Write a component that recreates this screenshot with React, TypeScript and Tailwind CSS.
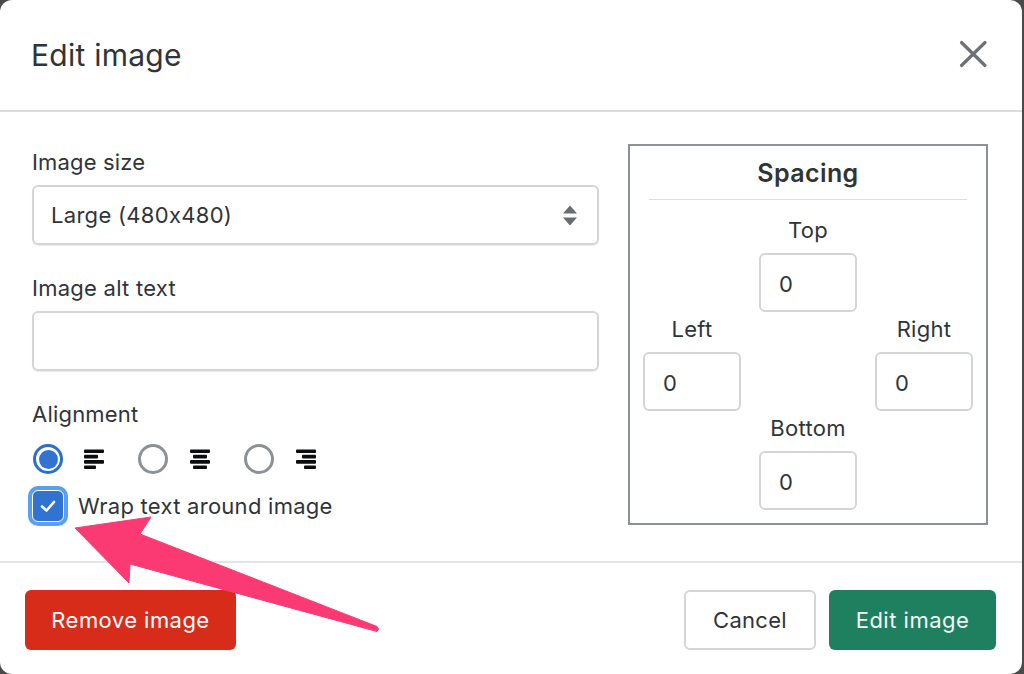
const font = { fontFamily: 'Inter, "Liberation Sans", sans-serif' };

function NumberBox() {
  return (
    <div className="flex h-[59px] w-[98px] items-center rounded-[6px] border-2 border-[#d3d6d9] bg-white pl-[18px] pt-[3px] text-[22px] text-[#303438]">
      0
    </div>
  );
}

function Field({ label }: { label: string }) {
  return (
    <div className="flex w-[98px] flex-col items-center">
      <div className="mb-[6px] h-[34px] whitespace-nowrap text-center text-[22px] leading-[34px] tracking-[0.3px] text-[#303438]">{label}</div>
      <NumberBox />
    </div>
  );
}

function AlignIcon({ kind }: { kind: 'left' | 'center' | 'right' }) {
  const bars =
    kind === 'left'
      ? [[0, 20], [0, 14], [0, 20], [0, 12]]
      : kind === 'center'
        ? [[0, 20], [3, 14], [0, 20], [3, 14]]
        : [[0, 20], [6, 14], [0, 20], [8, 12]];
  return (
    <svg width="20" height="21" viewBox="0 0 20 21" className="shrink-0">
      {bars.map(([x, w], i) => (
        <rect key={i} x={x} y={0.5 + i * 5.3} width={w} height="3.6" rx="1" fill="#0c0d0e" />
      ))}
    </svg>
  );
}

function Radio({ on }: { on?: boolean }) {
  return (
    <div
      className={
        on
          ? 'flex h-[30px] w-[30px] shrink-0 items-center justify-center rounded-full border-[3px] border-[#2c6ecb] bg-white'
          : 'h-[30px] w-[30px] shrink-0 rounded-full border-[3px] border-[#8c9196] bg-white'
      }
    >
      {on && <div className="h-[19px] w-[19px] rounded-full bg-[#3173d0]" />}
    </div>
  );
}

export default function App() {
  return (
    <div className="relative h-[674px] w-[1024px] overflow-hidden bg-[#4a4a4a] [font-feature-settings:'calt'_0]" style={font}>
      <div className="flex h-[674px] w-[1022px] flex-col rounded-[12px] bg-white text-[#303438]">
        <header className="flex h-[112px] shrink-0 items-center justify-between border-b-2 border-[#d9dbdd] pl-[31px] pr-[34px]">
          <h1 className="text-[30px] font-normal leading-none tracking-[0.25px] text-[#303438]">Edit image</h1>
          <svg width="32" height="32" viewBox="0 0 32 32" fill="none" stroke="#6d7175" strokeWidth="3.2" strokeLinecap="round">
            <path d="M5.5 3.5 L29 26.5 M29 3.5 L5.5 26.5" />
          </svg>
        </header>

        <main className="flex h-[451px] shrink-0 border-b-2 border-[#e4e5e7] pl-[32px] pt-[32px]">
          <div className="w-[567px] shrink-0">
            <div className="flex h-[41px] items-center pb-[4px] text-[22px] tracking-[0.15px]">Image size</div>
            <div className="flex h-[60px] items-center justify-between rounded-[6px] border-2 border-[#d3d6d9] pl-[17px] pr-[20px] text-[22px] tracking-[0.3px] shadow-[0_1px_1px_rgba(0,0,0,0.08)]">
              <span>Large (480x480)</span>
              <svg width="14" height="21" viewBox="0 0 14 21" fill="#6a6d70">
                <path d="M7 0.5 L14 8.5 H0 Z M0 12.5 H14 L7 20.5 Z" />
              </svg>
            </div>
            <div className="flex h-[66px] items-end pb-[12px] text-[22px] leading-none tracking-[0.25px]">Image alt text</div>
            <div className="h-[60px] rounded-[6px] border-2 border-[#d3d6d9] shadow-[0_1px_1px_rgba(0,0,0,0.08)]" />
            <div className="flex h-[66px] items-end pb-[12px] text-[22px] leading-none tracking-[0.2px]">Alignment</div>
            <div className="mt-[7px] flex h-[30px] items-center pl-[1px]">
              <Radio on />
              <div className="ml-[21px] mr-[34px]"><AlignIcon kind="left" /></div>
              <Radio />
              <div className="ml-[22px] mr-[34px]"><AlignIcon kind="center" /></div>
              <Radio />
              <div className="ml-[22px]"><AlignIcon kind="right" /></div>
            </div>
            <div className="mt-[12px] flex h-[40px] items-center">
              <div className="-ml-[4px] flex h-[40px] w-[40px] shrink-0 items-center justify-center rounded-[10px] bg-[#5a9ff0]">
                <div className="flex h-[32px] w-[32px] items-center justify-center rounded-[6px] border border-white bg-[#3173d0]">
                  <svg width="18" height="18" viewBox="0 0 18 18" fill="none" stroke="white" strokeWidth="2.6" strokeLinecap="round" strokeLinejoin="round">
                    <path d="M3 9.5 L7.5 13.5 L15 5" />
                  </svg>
                </div>
              </div>
              <span className="ml-[10px] text-[22px] tracking-[0.27px]">Wrap text around image</span>
            </div>
          </div>

          <section className="ml-[29px] h-[381px] w-[360px] shrink-0 border-2 border-[#8c9196] px-[13px]">
            <div className="mx-[6px] mb-[13px] h-[54px] border-b border-[#dcdedf] text-center text-[25px] font-semibold leading-[54px] tracking-[0.4px]">
              Spacing
            </div>
            <div className="flex justify-center"><Field label="Top" /></div>
            <div className="flex justify-between"><Field label="Left" /><Field label="Right" /></div>
            <div className="flex justify-center"><Field label="Bottom" /></div>
          </section>
        </main>

        <footer className="flex flex-1 items-start justify-between pl-[25px] pr-[26px] pt-[27px]">
          <button className="flex h-[60px] w-[211px] items-center justify-center rounded-[6px] bg-[#d72c1a] text-[22px] tracking-[0.45px] text-white">
            Remove image
          </button>
          <div className="flex gap-[13px]">
            <button className="flex h-[60px] w-[132px] items-center justify-center rounded-[6px] border-2 border-[#d3d6d9] bg-white text-[22px] tracking-[0.3px] text-[#303438]">
              Cancel
            </button>
            <button className="flex h-[60px] w-[167px] items-center justify-center rounded-[6px] bg-[#1f8060] text-[22px] tracking-[0.5px] text-[#f4f7f6]">
              Edit image
            </button>
          </div>
        </footer>
      </div>

      <svg className="absolute left-0 top-0" width="1024" height="674" viewBox="0 0 1024 674">
        <path
          d="M75 528 L151 517 L140 534 L377 626.5 Q380 629 377 631.5 L130 564 L129 583 Z"
          fill="#fb3a74"
          stroke="#fb3a74"
          strokeWidth="1"
          strokeLinejoin="round"
        />
      </svg>
    </div>
  );
}
